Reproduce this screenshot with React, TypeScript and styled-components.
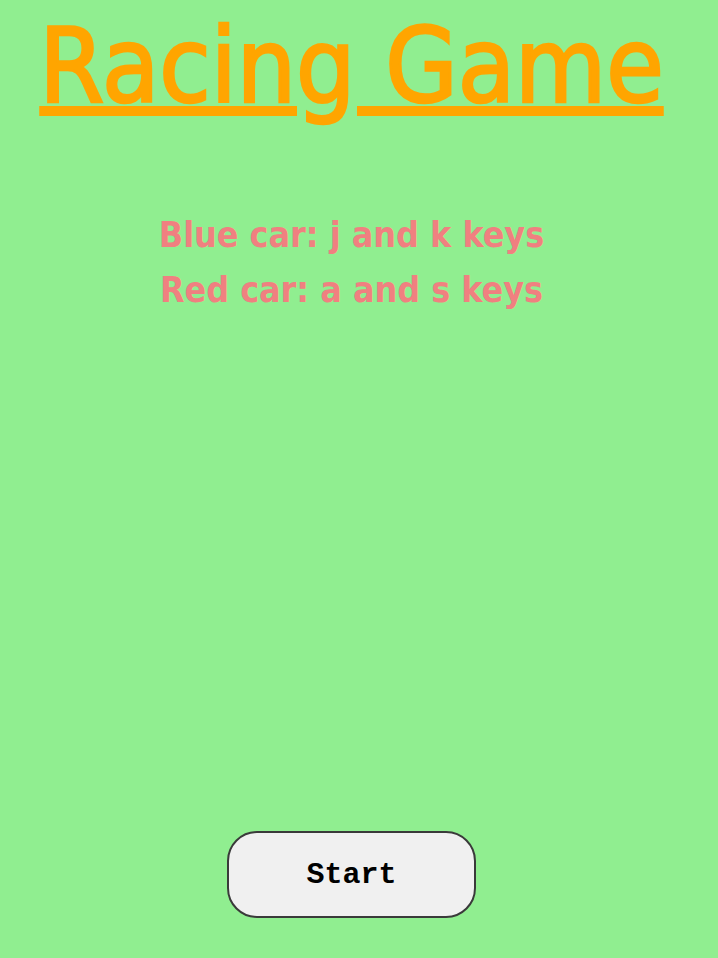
import React from "react";
import styled, { createGlobalStyle } from "styled-components";

const GlobalStyle = createGlobalStyle`
  html, body {
    margin: 0;
    padding: 0;
    background-color: lightgreen;
  }
  body {
    font-family: "DejaVu Sans Condensed", "DejaVu Sans", sans-serif;
  }
`;

const Page = styled.div`
  width: 703px;
  height: 958px;
  display: flex;
  flex-direction: column;
  align-items: center;
  text-align: center;
`;

// regular condensed face, thickened a little with a stroke
const Title = styled.h1`
  margin: 6px 0 0;
  color: orange;
  font-size: 104px;
  font-weight: normal;
  -webkit-text-stroke: 2.6px orange;
  line-height: 120px;
  white-space: nowrap;
  text-decoration: underline;
  text-decoration-thickness: 10px;
  text-underline-offset: 4px;
`;

const Instructions = styled.div`
  margin-top: 81px;
  display: flex;
  flex-direction: column;
`;

const KeyLine = styled.p`
  margin: 0;
  color: lightcoral;
  font-size: 35.5px;
  font-weight: bold;
  line-height: 55px;
`;

const StartButton = styled.button`
  margin-top: auto;
  margin-bottom: 40px;
  width: 249px;
  height: 87px;
  border: 2px solid #3a3a3a;
  border-radius: 30px;
  background: #f0f0f0;
  font-family: "Liberation Mono", "Courier New", monospace;
  font-size: 30px;
  font-weight: bold;
  color: #000;
  cursor: pointer;
`;

export default function App(): JSX.Element {
  return (
    <Page>
      <GlobalStyle />
      <Title>Racing Game</Title>
      <Instructions>
        <KeyLine>Blue car: j and k keys</KeyLine>
        <KeyLine>Red car: a and s keys</KeyLine>
      </Instructions>
      <StartButton>Start</StartButton>
    </Page>
  );
}
